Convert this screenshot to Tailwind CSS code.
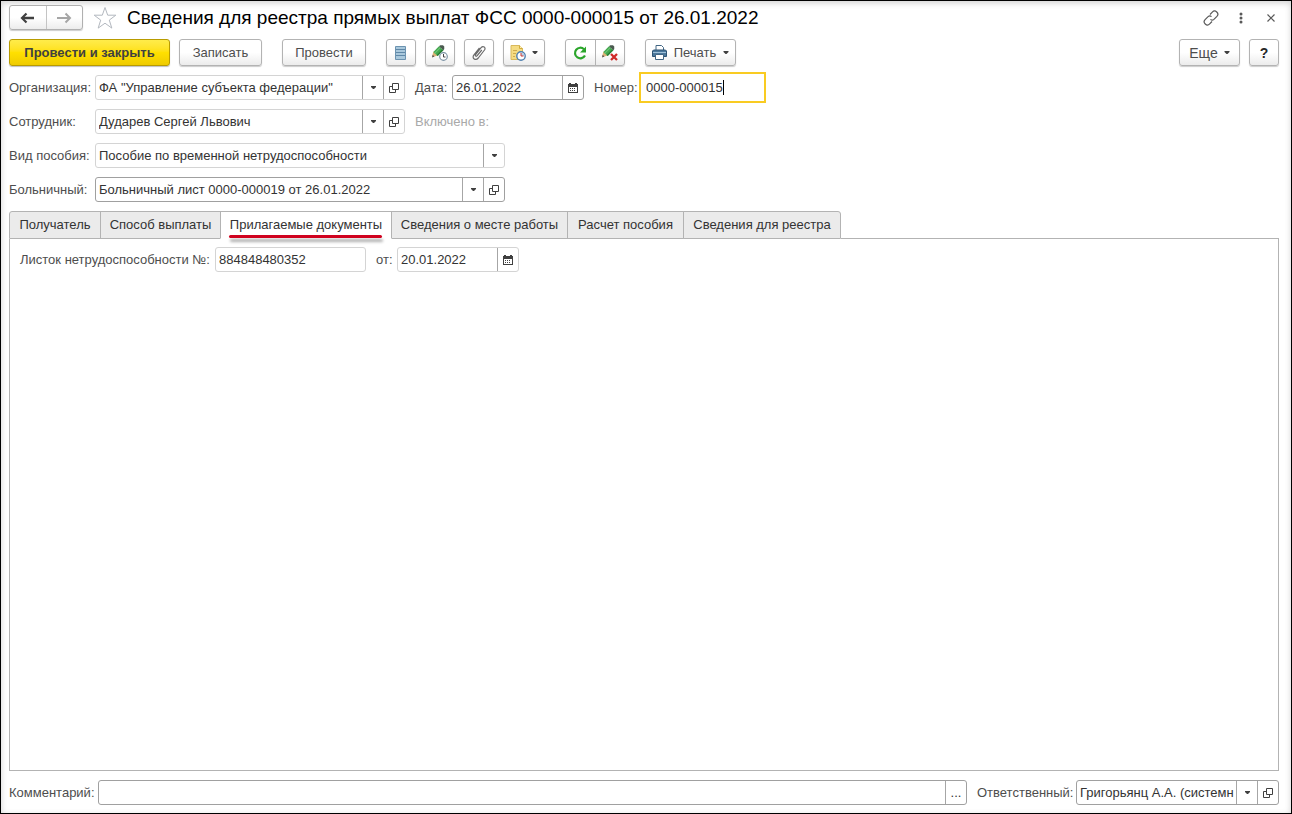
<!DOCTYPE html>
<html lang="ru">
<head>
<meta charset="utf-8">
<title>Сведения для реестра прямых выплат ФСС</title>
<script src="https://cdn.jsdelivr.net/npm/@tailwindcss/browser@4"></script>
</head>
<body class="bg-white font-['Liberation_Sans',Arial,sans-serif] text-[13px] leading-4 text-[#4d4d4d]">
<svg class="hidden">
  <symbol id="down" viewBox="0 0 5 3"><path d="M0 0h5v1L3 3H2L0 1z" fill="#404040"/></symbol>
  <symbol id="open" viewBox="0 0 10 10"><path d="M3.500.5h6v6h-6zM3 3.500H.5v6h6V7" fill="none" stroke="#404040"/></symbol>
  <symbol id="cal" viewBox="0 0 10 10"><path d="M0 1h1V0h2v1h4V0h2v1h1v9H0z" fill="#404040"/><path d="M1 4h8v5H1z" fill="#fff"/><path d="M2 5h1v1H2zM4 5h1v1H4zM6 5h1v1H6zM2 7h1v1H2zM4 7h1v1H4zM6 7h1v1H6z" fill="#404040"/></symbol>
  <symbol id="pencil" viewBox="0 0 16 16"><path d="M0 14l1.500-6.500 5 4.500z" fill="#dfb176"/><path d="M0 14.200l.8-3 2 2z" fill="#555"/><path d="M1.500 8L8 1.500l5 4.500-6.500 6.500z" fill="#43a84e"/><path d="M3 9.500l7-7" stroke="#72c579" stroke-width="1.200"/><path d="M6.500 12.500L13 6l-1.200-1.200-6.500 6.500z" fill="#287f36"/><path d="M8 1.500L9.500.2h3l1.500 1.500v3L13 6z" fill="#4b5a50"/></symbol>
</svg>
<main class="flex min-h-screen flex-col border border-black pt-1 pr-3 pb-2 pl-2 shadow-[inset_0_2px_6px_#00000030]">
  <header class="flex h-[25px] items-center">
    <div class="flex h-[25px] w-[74px] overflow-hidden rounded-[3px] border border-[#b0b0b0] bg-linear-to-b from-white from-50% to-[#ececec] shadow-[0_1px_1px_#00000033]">
      <button aria-label="Назад" class="flex flex-1 items-center justify-center border-r border-[#c4c4c4]"><svg class="h-3 w-[15px]" viewBox="0 0 15 12"><path d="M14 6H3" stroke="#404040" stroke-width="2.400"/><path d="M6.500 1.500L2 6l4.500 4.500" fill="none" stroke="#404040" stroke-width="2.200"/></svg></button>
      <button aria-label="Вперед" class="flex flex-1 items-center justify-center"><svg class="h-3 w-[15px]" viewBox="0 0 15 12"><path d="M0 6h12.500M8.500 1.500L13 6l-4.500 4.500" fill="none" stroke="#a6a6a6" stroke-width="2"/></svg></button>
    </div>
    <button aria-label="В избранное" class="ml-2.5"><svg class="size-6" viewBox="0 0 24 24"><path d="M12 1.500l2.700 7.700h8.100l-6.500 4.900 2.500 8-6.800-4.900-6.800 4.900 2.500-8L1.200 9.200h8.100z" fill="#fff" stroke="#b3b8bf"/></svg></button>
    <h1 class="ml-2.5 flex-1 text-[19px] leading-6 whitespace-nowrap text-black">Сведения для реестра прямых выплат ФСС 0000-000015 от 26.01.2022</h1>
    <button aria-label="Ссылка"><svg class="size-4" viewBox="0 0 16 16" fill="none" stroke="#595959" stroke-width="1.200"><path d="M7 4.500l2.300-2.400a3 3 0 0 1 4.600 4.300l-3 3a2.500 2.500 0 0 1-3.400 0M9 11.500l-2.300 2.400a3 3 0 0 1-4.600-4.300l3-3a2.500 2.500 0 0 1 3.400 0"/></svg></button>
    <button aria-label="Меню" class="ml-5"><svg class="h-3 w-1" viewBox="0 0 4 12" fill="#595959"><circle cx="2" cy="2" r="1.500"/><circle cx="2" cy="6" r="1.500"/><circle cx="2" cy="10" r="1.500"/></svg></button>
    <button aria-label="Закрыть" class="mr-1 ml-6"><svg class="size-2" viewBox="0 0 8 8"><path d="M.5.5l7 7m0-7l-7 7" stroke="#595959" stroke-width="1.200"/></svg></button>
  </header>

  <div class="mt-[9px] flex h-[27px] text-[14px]">
    <button class="w-[161px] rounded-[3px] border border-[#b89b00] bg-linear-to-b from-[#ffec4a] via-[#ffe000] to-[#efcb00] text-[13px] font-bold whitespace-nowrap text-[#404040] shadow-[0_1px_1px_#00000040]">Провести и закрыть</button>
    <button class="ml-[9px] w-[83px] rounded-[3px] border border-[#b3b3b3] bg-linear-to-b from-white from-50% to-[#ececec] text-[13px] shadow-[0_1px_1px_#00000033]">Записать</button>
    <button class="ml-5 w-[84px] rounded-[3px] border border-[#b3b3b3] bg-linear-to-b from-white from-50% to-[#ececec] text-[13px] shadow-[0_1px_1px_#00000033]">Провести</button>
    <button aria-label="Список" class="ml-5 flex w-[30px] items-center justify-center rounded-[3px] border border-[#b3b3b3] bg-linear-to-b from-white from-50% to-[#ececec] shadow-[0_1px_1px_#00000033]"><svg class="h-4 w-3" viewBox="0 0 12 16"><path d="M.5 1.500h10v13H.5z" fill="#a9c8dc" stroke="#6c93b0"/><path d="M1 4.500h9M1 7.500h9M1 10.500h9" stroke="#5f88a8"/></svg></button>
    <button aria-label="Отложенное изменение" class="ml-[9px] flex w-[30px] items-center justify-center rounded-[3px] border border-[#b3b3b3] bg-linear-to-b from-white from-50% to-[#ececec] shadow-[0_1px_1px_#00000033]"><svg class="size-4" viewBox="0 0 16 16"><svg width="14" height="14"><use href="#pencil"/></svg><circle cx="11.500" cy="11.500" r="3.800" fill="#fff" stroke="#7d93a5" stroke-width="1.200"/><path d="M11.500 9v3h2" fill="none" stroke="#444"/></svg></button>
    <button aria-label="Присоединенные файлы" class="ml-[9px] flex w-[30px] items-center justify-center rounded-[3px] border border-[#b3b3b3] bg-linear-to-b from-white from-50% to-[#ececec] shadow-[0_1px_1px_#00000033]"><svg class="size-4" viewBox="0 0 16 16"><path d="M10.800 5l-4.600 5.700c-1 1.200-2.500.1-1.600-1.100l5.500-6.900c2-2.400 5.200-.2 3.400 2.300l-6.200 8c-2.600 3.200-6.800.3-4.500-2.900L8.500 3" fill="none" stroke="#6b6b6b" stroke-width="1.200"/></svg></button>
    <button aria-label="Создать на основании" class="ml-[9px] flex w-[42px] items-center justify-center gap-[6px] rounded-[3px] border border-[#b3b3b3] bg-linear-to-b from-white from-50% to-[#ececec] shadow-[0_1px_1px_#00000033]"><svg class="size-4" viewBox="0 0 16 16"><path d="M1 .5h8.500l3 3v11H1z" fill="#f5dc82" stroke="#d9b95c"/><path d="M9.500.5v3h3" fill="#fff3bd" stroke="#d1aa3d"/><path d="M3 5.500h4M3 8.500h3M3 11.500h2" stroke="#d0ac4c"/><circle cx="11" cy="11" r="4.200" fill="#fff" stroke="#4e7fae" stroke-width="1.400"/><path d="M11 11V7.500a3.500 3.500 0 0 1 3.500 3.500z" fill="#b9d2e8"/><path d="M11 8v3h2.500" fill="none" stroke="#d23b35"/></svg><svg class="h-[3px] w-[6px]"><use href="#down"/></svg></button>
    <div class="ml-5 flex w-[60px] rounded-[3px] border border-[#b3b3b3] bg-linear-to-b from-white from-50% to-[#ececec] shadow-[0_1px_1px_#00000033]">
      <button aria-label="Обновить" class="flex flex-1 items-center justify-center border-r border-[#b3b3b3]"><svg class="size-3.5" viewBox="0 0 14 14"><path d="M11 3.200A5.300 5.300 0 1 0 12 9.500" fill="none" stroke="#2ba52b" stroke-width="2.200"/><path d="M13 .5v6H7z" fill="#2ba52b"/></svg></button>
      <button aria-label="Отменить изменение" class="flex flex-1 items-center justify-center"><svg class="size-4" viewBox="0 0 16 16"><svg width="14" height="14"><use href="#pencil"/></svg><path d="M9 9l6 6m0-6l-6 6" stroke="#cf2a27" stroke-width="2.300"/></svg></button>
    </div>
    <button class="ml-5 flex w-[91px] items-center justify-center gap-[7px] rounded-[3px] border border-[#b3b3b3] bg-linear-to-b from-white from-50% to-[#ececec] text-[13px] shadow-[0_1px_1px_#00000033]"><svg class="size-[15px]" viewBox="0 0 15 15"><path d="M4 5V.5h5.500l2 2V5" fill="#fff" stroke="#426684"/><path d="M1.500 5h12l1 1v5.500H.5V6z" fill="#4b789c" stroke="#2e5474"/><path d="M1 7.500h13" stroke="#9fc0d8"/><path d="M3.500 9.500h8v5h-8z" fill="#fff" stroke="#426684"/></svg>Печать<svg class="h-[3px] w-[6px]"><use href="#down"/></svg></button>
    <button class="ml-auto flex w-[61px] items-center justify-center gap-[6px] rounded-[3px] border border-[#b3b3b3] bg-linear-to-b from-white from-50% to-[#ececec] shadow-[0_1px_1px_#00000033]">Еще<svg class="h-[3px] w-[6px]"><use href="#down"/></svg></button>
    <button aria-label="Справка" class="ml-[9px] w-[30px] rounded-[3px] border border-[#b3b3b3] bg-linear-to-b from-white from-50% to-[#ececec] font-bold text-[#262626] shadow-[0_1px_1px_#00000033]">?</button>
  </div>

  <form class="mt-[9px] flex flex-col gap-[9px] text-[#333]">
    <div class="flex h-[25px] items-center">
      <label for="org" class="w-[86px] text-[#4d4d4d]">Организация:</label>
      <div class="flex h-[25px] w-[310px] rounded-[3px] border border-[#d4d4d4]">
        <input id="org" value='ФА "Управление субъекта федерации"' class="min-w-0 flex-1 px-[3px] outline-none">
        <button type="button" aria-label="Выбрать" class="flex w-[21px] items-center justify-center border-l border-[#a6a6a6]"><svg class="h-[3px] w-[5px]"><use href="#down"/></svg></button>
        <button type="button" aria-label="Открыть" class="flex w-[21px] items-center justify-center border-l border-[#a6a6a6]"><svg class="size-2.5"><use href="#open"/></svg></button>
      </div>
      <label for="date" class="ml-[10px] w-[37px] text-[#4d4d4d]">Дата:</label>
      <div class="flex h-[25px] w-[132px] rounded-[3px] border border-[#a0a0a0]">
        <input id="date" value="26.01.2022" class="min-w-0 flex-1 px-[3px] outline-none">
        <button type="button" aria-label="Календарь" class="flex w-[21px] items-center justify-center border-l border-[#a6a6a6]"><svg class="size-2.5"><use href="#cal"/></svg></button>
      </div>
      <label for="num" class="ml-[10px] w-[45px] text-[#4d4d4d]">Номер:</label>
      <div class="relative flex h-[31px] w-[127px] border-2 border-[#f9cb22]">
        <input id="num" value="0000-000015" class="min-w-0 flex-1 px-[5px] outline-none">
        <span class="absolute top-1.5 left-[82px] h-[15px] w-px bg-black"></span>
      </div>
    </div>
    <div class="flex h-[25px] items-center">
      <label for="emp" class="w-[86px] text-[#4d4d4d]">Сотрудник:</label>
      <div class="flex h-[25px] w-[310px] rounded-[3px] border border-[#d4d4d4]">
        <input id="emp" value="Дударев Сергей Львович" class="min-w-0 flex-1 px-[3px] outline-none">
        <button type="button" aria-label="Выбрать" class="flex w-[21px] items-center justify-center border-l border-[#a6a6a6]"><svg class="h-[3px] w-[5px]"><use href="#down"/></svg></button>
        <button type="button" aria-label="Открыть" class="flex w-[21px] items-center justify-center border-l border-[#a6a6a6]"><svg class="size-2.5"><use href="#open"/></svg></button>
      </div>
      <span class="ml-[10px] text-[#a9a9a9]">Включено в:</span>
    </div>
    <div class="flex h-[25px] items-center">
      <label for="kind" class="w-[86px] whitespace-nowrap text-[#4d4d4d]">Вид пособия:</label>
      <div class="relative flex h-[25px] w-[410px] rounded-[3px] border border-[#d4d4d4]">
        <select id="kind" class="flex-1 appearance-none px-[3px] outline-none"><option>Пособие по временной нетрудоспособности</option></select>
        <span class="pointer-events-none absolute inset-y-0 right-0 flex w-[21px] items-center justify-center border-l border-[#a6a6a6]"><svg class="h-[3px] w-[5px]"><use href="#down"/></svg></span>
      </div>
    </div>
    <div class="flex h-[25px] items-center">
      <label for="sick" class="w-[86px] text-[#4d4d4d]">Больничный:</label>
      <div class="flex h-[25px] w-[410px] rounded-[3px] border border-[#a0a0a0]">
        <input id="sick" value="Больничный лист 0000-000019 от 26.01.2022" class="min-w-0 flex-1 px-[3px] outline-none">
        <button type="button" aria-label="Выбрать" class="flex w-[21px] items-center justify-center border-l border-[#a6a6a6]"><svg class="h-[3px] w-[5px]"><use href="#down"/></svg></button>
        <button type="button" aria-label="Открыть" class="flex w-[21px] items-center justify-center border-l border-[#a6a6a6]"><svg class="size-2.5"><use href="#open"/></svg></button>
      </div>
    </div>
  </form>

  <div role="tablist" class="mt-[9px] flex h-7 whitespace-nowrap text-[#333]">
    <button role="tab" class="w-[92px] rounded-tl-[3px] border border-[#b3b3b3] bg-[#ebebeb]">Получатель</button>
    <button role="tab" class="-ml-px w-[121px] border border-[#b3b3b3] bg-[#ebebeb]">Способ выплаты</button>
    <button role="tab" aria-selected="true" class="relative -ml-px w-[172px] border border-[#b3b3b3] border-b-white bg-white">Прилагаемые документы<span class="absolute bottom-0 left-2 h-[3px] w-[153px] rounded-full bg-[#d0021f] shadow-[1px_4px_3px_#00000050]"></span></button>
    <button role="tab" class="-ml-px w-[177px] border border-[#b3b3b3] bg-[#ebebeb]">Сведения о месте работы</button>
    <button role="tab" class="-ml-px w-[117px] border border-[#b3b3b3] bg-[#ebebeb]">Расчет пособия</button>
    <button role="tab" class="-ml-px w-[158px] rounded-tr-[3px] border border-[#b3b3b3] bg-[#ebebeb]">Сведения для реестра</button>
    <span class="flex-1 border-b border-[#b3b3b3]"></span>
  </div>
  <section role="tabpanel" class="flex-1 border border-t-0 border-[#b3b3b3] px-2.5 pt-2">
    <div class="flex h-[25px] items-center text-[#333]">
      <label for="leaf" class="w-[195px] whitespace-nowrap text-[#4d4d4d]">Листок нетрудоспособности №:</label>
      <input id="leaf" value="884848480352" class="h-[25px] w-[151px] rounded-[3px] border border-[#d4d4d4] px-[3px] outline-none">
      <label for="leafdate" class="ml-[10px] w-[21px] text-[#4d4d4d]">от:</label>
      <div class="flex h-[25px] w-[122px] rounded-[3px] border border-[#d4d4d4]">
        <input id="leafdate" value="20.01.2022" class="min-w-0 flex-1 px-[3px] outline-none">
        <button type="button" aria-label="Календарь" class="flex w-[21px] items-center justify-center border-l border-[#a6a6a6]"><svg class="size-2.5"><use href="#cal"/></svg></button>
      </div>
    </div>
  </section>

  <footer class="mt-[9px] flex h-[25px] items-center text-[#333]">
    <label for="comment" class="w-[89px] text-[#4d4d4d]">Комментарий:</label>
    <div class="flex h-[25px] flex-1 rounded-[3px] border border-[#a0a0a0]">
      <input id="comment" class="min-w-0 flex-1 px-[3px] outline-none">
      <button aria-label="Открыть комментарий" class="w-[21px] border-l border-[#a6a6a6]">...</button>
    </div>
    <label for="resp" class="ml-[10px] w-[99px] text-[#4d4d4d]">Ответственный:</label>
    <div class="flex h-[25px] w-[203px] rounded-[3px] border border-[#a0a0a0]">
      <input id="resp" value="Григорьянц А.А. (системн" class="min-w-0 flex-1 pl-[3px] outline-none">
      <button aria-label="Выбрать" class="flex w-[21px] items-center justify-center border-l border-[#a6a6a6]"><svg class="h-[3px] w-[5px]"><use href="#down"/></svg></button>
      <button aria-label="Открыть" class="flex w-[21px] items-center justify-center border-l border-[#a6a6a6]"><svg class="size-2.5"><use href="#open"/></svg></button>
    </div>
  </footer>
</main>
</body>
</html>
